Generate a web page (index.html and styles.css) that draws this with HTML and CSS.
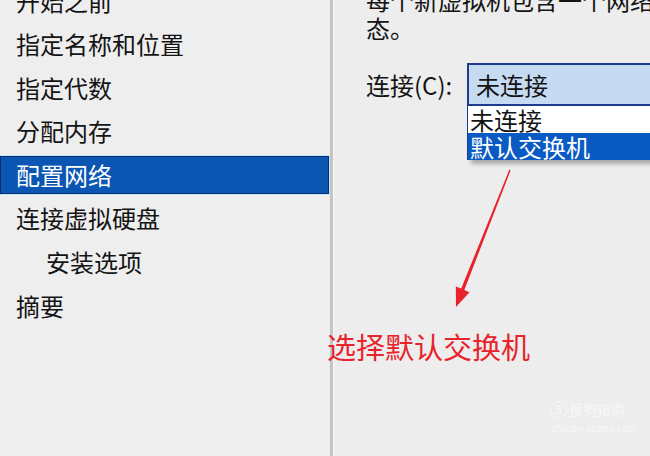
FILE: index.html
```html
<!DOCTYPE html>
<html lang="zh-CN">
<head>
    <meta charset="UTF-8">
    <meta name="viewport" content="width=device-width, initial-scale=1.0">
    <title>新建虚拟机向导 - 配置网络</title>
    <link rel="stylesheet" href="styles.css">
</head>
<body>
    <div class="wizard">
        <ul class="steps">
            <li class="step">开始之前</li>
            <li class="step">指定名称和位置</li>
            <li class="step">指定代数</li>
            <li class="step">分配内存</li>
            <li class="step active">配置网络</li>
            <li class="step">连接虚拟硬盘</li>
            <li class="step sub">安装选项</li>
            <li class="step">摘要</li>
        </ul>

        <div class="divider"></div>

        <div class="content">
            <p class="desc">每个新虚拟机包含一个网络适配器。可以将网络适配器配置为使用虚拟交换机，或者它可以保持断开连接状<br>态。</p>

            <div class="field">
                <label class="field-label">连接(C):</label>
                <div class="combo">
                    <div class="combo-value">未连接</div>
                    <ul class="combo-list">
                        <li class="option">未连接</li>
                        <li class="option selected">默认交换机</li>
                    </ul>
                </div>
            </div>
        </div>
    </div>

    <!-- annotation drawn over the screenshot -->
    <svg class="arrow" width="650" height="456" viewBox="0 0 650 456">
        <polygon points="509.4,169.6 510.6,170.4 464.3,290 469.5,292.2 456,307 455.8,286.5 461.2,288.6" fill="#e8232c"/>
    </svg>
    <div class="note">选择默认交换机</div>

    <div class="watermark">
        <div class="wm-brand"><span class="wm-logo">S</span>搜狗指南</div>
        <div class="wm-url">zhinan.sogou.com</div>
    </div>
</body>
</html>
```

FILE: styles.css
```css
html, body {
    margin: 0;
    padding: 0;
}
body {
    width: 650px;
    height: 456px;
    overflow: hidden;
    position: relative;
    background: #ededed;
    font-family: "Microsoft YaHei", "Noto Sans CJK SC", sans-serif;
    color: #141414;
}
.wizard {
    display: flex;
    height: 456px;
}

/* left step list */
.steps {
    list-style: none;
    margin: -18.5px 0 0 0;
    padding: 0;
    width: 330px;
    flex-shrink: 0;
    display: flex;
    flex-direction: column;
    gap: 5.6px;
    background: #eeeeee;
}
.step {
    height: 38px;
    line-height: 38px;
    padding-left: 16px;
    font-size: 24px;
    white-space: nowrap;
    box-sizing: border-box;
}
.step.sub {
    padding-left: 46px;
}
.step.active {
    width: 329px;
    background: #0b56b3;
    color: #ffffff;
    border: 1px solid #0c2c6e;
    box-shadow: 0 0 0 1px #bfe8fb;
    line-height: 36px;
    padding-left: 15px;
}

.divider {
    width: 3px;
    flex-shrink: 0;
    background: #c4c4c4;
    border-right: 1px solid #f8f8f8;
}

/* right pane */
.content {
    flex: 1;
    padding-left: 32px;
    overflow: hidden;
}
.desc {
    margin: -14px 0 0 0;
    font-size: 24px;
    line-height: 28px;
    white-space: nowrap;
}
.field {
    display: flex;
    align-items: flex-start;
    margin-top: 21px;
}
.field-label {
    font-size: 24px;
    line-height: 43px;
    width: 101px;
    flex-shrink: 0;
}
.combo {
    width: 300px;
    flex-shrink: 0;
}
.combo-value {
    height: 43px;
    line-height: 39px;
    box-sizing: border-box;
    border: 2px solid #1d3c8c;
    background: #c6dbf1;
    font-size: 24px;
    padding-left: 7px;
}
.combo-list {
    list-style: none;
    margin: 0;
    padding: 0;
    border-left: 1px solid #1d3c8c;
    background: #ffffff;
    box-shadow: 4px 4px 4px rgba(0, 0, 0, 0.28);
}
.option {
    height: 27px;
    line-height: 27px;
    font-size: 24px;
    padding-left: 2px;
    white-space: nowrap;
}
.option.selected {
    background: #0a5ac4;
    color: #ffffff;
}

/* annotation */
.arrow {
    position: absolute;
    left: 0;
    top: 0;
}
.note {
    position: absolute;
    left: 327px;
    top: 330px;
    font-size: 29px;
    line-height: 32px;
    color: #e8232c;
    white-space: nowrap;
}

.watermark {
    position: absolute;
    left: 550px;
    top: 400px;
    color: #ffffff;
    opacity: 0.6;
}
.wm-brand {
    display: flex;
    align-items: center;
    gap: 2px;
    font-size: 14px;
    line-height: 18px;
}
.wm-logo {
    width: 15px;
    height: 15px;
    border-radius: 50%;
    border: 1px solid #ffffff;
    font-size: 11px;
    line-height: 15px;
    text-align: center;
    font-weight: bold;
}
.wm-url {
    font-size: 10px;
    line-height: 14px;
    margin-top: 3px;
    margin-left: 2px;
}
```
